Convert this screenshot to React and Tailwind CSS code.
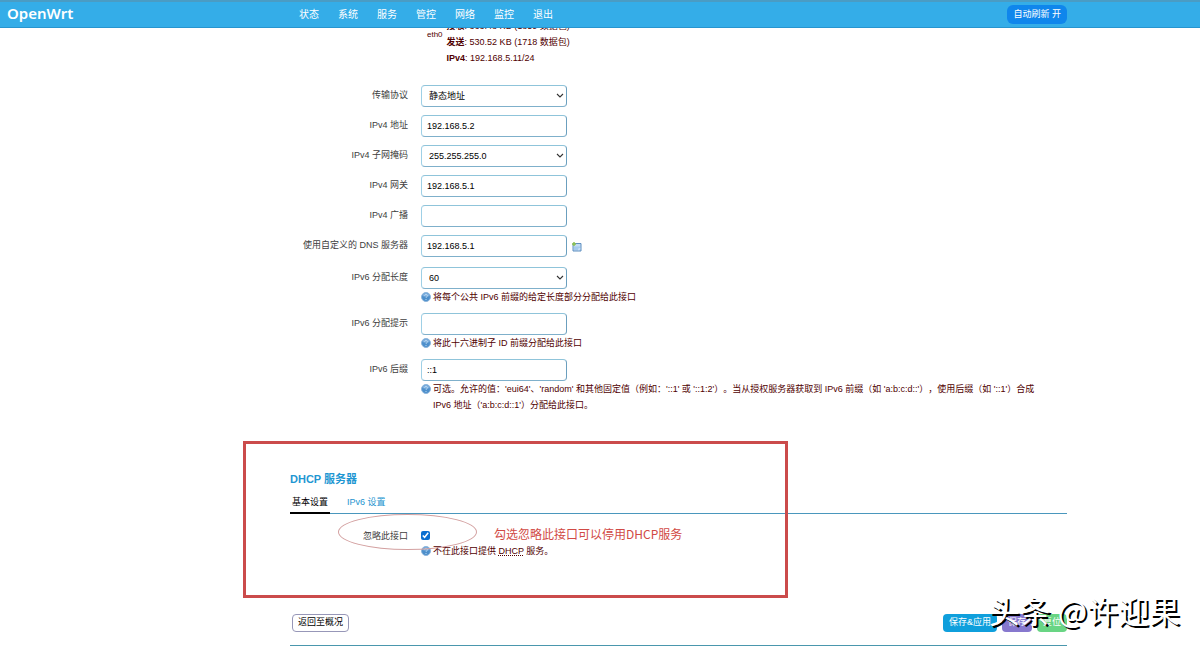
import React from "react";

function HelpIcon() {
  return (
    <svg viewBox="0 0 20 20" className="mt-[3px] h-[10px] w-[10px] shrink-0" aria-hidden="true">
      <circle cx="10" cy="10" r="9" fill="#4d8fcb" stroke="#8fb6dc" strokeWidth="2" />
      <path d="M3 8a7 6 0 0 1 14 0q-7 3-14 0z" fill="#7fb0de" />
      <path d="M7 7.500c.3-3.400 6-3.300 6 0 0 2-3 2.200-3 4.300M10 14v2" fill="none" stroke="#b9d8f3" strokeWidth="2" />
    </svg>
  );
}

function AddIcon() {
  return (
    <svg viewBox="0 0 20 20" className="h-[10px] w-[10px]" aria-hidden="true">
      <path d="M2 3h16v15H2z" fill="#c3dcf4" stroke="#5f8fc0" strokeWidth="2" />
      <path d="M4 9h12v7H4z" fill="#a5cbee" />
      <path d="M17 13h-4v4z" fill="#e9f4ff" />
      <path d="M4 0v8M0 4h8" stroke="#8cc152" strokeWidth="3" />
    </svg>
  );
}

function Chevron() {
  return (
    <svg viewBox="0 0 8 6" className="pointer-events-none absolute top-2 right-[3px] h-[6px] w-2" aria-hidden="true">
      <path d="M1 1l3 3 3-3" fill="none" stroke="#333" strokeWidth="1.100" />
    </svg>
  );
}

const box =
  "block h-[22px] w-full appearance-none rounded-[4px] border border-t-[#8fc4da] border-r-[#6b9fbe] border-b-[#7fb0cb] border-l-[#9fd0e6] bg-white text-[9px] leading-[20px] text-black outline-none";

function Field({ id, label, value, select, help, add }) {
  return (
    <div className="flex gap-[13px]">
      <label htmlFor={id} className="w-[118px] shrink-0 pt-1 text-right leading-3 text-[#404040]">
        {label}
      </label>
      <div className="min-w-0 flex-1">
        <div className="flex items-center gap-[5px]">
          <div className="relative w-[146px]">
            {select ? (
              <>
                <select id={id} className={box + " px-[7px]"} defaultValue={value}>
                  <option>{value}</option>
                </select>
                <Chevron />
              </>
            ) : (
              <input id={id} type="text" className={box + " px-[5px]"} defaultValue={value} />
            )}
          </div>
          {add && (
            <button type="button" aria-label="添加" className="pt-[2px]">
              <AddIcon />
            </button>
          )}
        </div>
        {help && <Help>{help}</Help>}
      </div>
    </div>
  );
}

function Help({ children }) {
  return (
    <div className="flex gap-[2px] pr-6 text-[#500000]">
      <HelpIcon />
      <p className="leading-4 [text-spacing-trim:space-all]">{children}</p>
    </div>
  );
}

const nav = ["状态", "系统", "服务", "管控", "网络", "监控", "退出"];

export default function App() {
  return (
    <div className="relative overflow-hidden bg-white font-['Liberation_Sans','Noto_Sans_CJK_SC',sans-serif] text-[9px]">
      <header className="relative z-10 flex h-7 items-center border-t-2 border-b border-t-[#4a9cc4] border-b-[#2795cf] bg-[#34ade8] pr-[133px] text-white">
        <a href="#" className="w-[299px] shrink-0 pb-[3px] pl-[7px] font-['Noto_Sans',sans-serif] text-[15px] leading-5 font-semibold">
          OpenWrt
        </a>
        <nav className="flex flex-1 gap-[19px] text-[10px]">
          {nav.map((n) => (
            <a key={n} href="#">{n}</a>
          ))}
        </nav>
        <button type="button" className="h-[19px] rounded-[6px] bg-[#0f86ec] px-[6px] text-[9px]">
          自动刷新 开
        </button>
      </header>

      <main className="pr-[133px] pl-[290px]">
        <div className="-mt-[10px] flex gap-1 pl-[137px] leading-4 text-[#500000]">
          <span className="pt-[9px] text-[8px]">eth0</span>
          <div>
            <p><b>接收</b>: 363.48 KB (1859 数据包)</p>
            <p><b>发送</b>: 530.52 KB (1718 数据包)</p>
            <p><b>IPv4</b>: 192.168.5.11/24</p>
          </div>
        </div>

        <form className="flex flex-col gap-2 pt-[19px]">
          <Field id="proto" label="传输协议" value="静态地址" select />
          <Field id="ip" label="IPv4 地址" value="192.168.5.2" />
          <Field id="mask" label="IPv4 子网掩码" value="255.255.255.0" select />
          <Field id="gw" label="IPv4 网关" value="192.168.5.1" />
          <Field id="bc" label="IPv4 广播" value="" />
          <Field id="dns" label="使用自定义的 DNS 服务器" value="192.168.5.1" add />
          <div className="flex flex-col gap-2 pt-[2px]">
            <Field id="len" label="IPv6 分配长度" value="60" select help="将每个公共 IPv6 前缀的给定长度部分分配给此接口" />
            <Field id="hint" label="IPv6 分配提示" value="" help="将此十六进制子 ID 前缀分配给此接口" />
            <Field
              id="suffix"
              label="IPv6 后缀"
              value="::1"
              help="可选。允许的值：'eui64'、'random' 和其他固定值（例如：'::1' 或 '::1:2'）。当从授权服务器获取到 IPv6 前缀（如 'a:b:c:d::'），使用后缀（如 '::1'）合成 IPv6 地址（'a:b:c:d::1'）分配给此接口。"
            />
          </div>
        </form>

        <section className="relative mt-[58px] h-[127px]">
          <h2 className="text-[11px] leading-4 font-bold text-[#1f97d2]">DHCP 服务器</h2>
          <div className="mt-[7px] flex gap-[15px] border-b border-[#4a97bd] leading-4">
            <a href="#" className="-mb-px border-b-2 border-black px-[2px] pb-[2px] text-black">基本设置</a>
            <a href="#" className="px-[2px] text-[#2494cf]">IPv6 设置</a>
          </div>
          <div className="flex items-start gap-[13px] pt-[14px]">
            <label htmlFor="ignore" className="w-[118px] shrink-0 pt-[2px] text-right leading-3 text-[#404040]">忽略此接口</label>
            <div>
              <input id="ignore" type="checkbox" defaultChecked className="mt-[3px] mb-[3px] block h-[9px] w-[9px] accent-[#0b6fd0]" />
              <Help>
                不在此接口提供 <abbr title="动态主机配置协议" className="underline decoration-dotted">DHCP</abbr> 服务。
              </Help>
            </div>
          </div>
          <div className="pointer-events-none absolute -top-[30px] -left-[47px] h-[157px] w-[545px] border-[3px] border-[#cb4b4b]" />
          <div className="pointer-events-none absolute top-[43px] left-[48px] h-[36px] w-[139px] rounded-[50%] border border-[#d3a0a0]" />
          <p className="absolute top-[53px] left-[204px] font-['Noto_Sans_CJK_SC',sans-serif] text-[12px] leading-5 text-[#d14a45]">
            勾选忽略此接口可以停用DHCP服务
          </p>
        </section>

        <footer className="flex items-center gap-[5px] border-b border-[#4a97ad] pt-4 pb-[13px] pl-[2px]">
          <button type="button" className="mr-auto h-[18px] rounded-[4px] border border-[#9797b8] px-[5px] text-black">返回至概况</button>
          <button type="button" className="h-[18px] rounded-[4px] bg-[#0f9fdc] px-[6px] text-white">保存&amp;应用</button>
          <button type="button" className="h-[18px] rounded-[4px] bg-[#8778ce] px-[6px] text-white">保存</button>
          <button type="button" className="h-[18px] rounded-[4px] bg-[#69d584] px-[6px] text-white">复位</button>
        </footer>
      </main>

      <p className="pointer-events-none absolute right-5 bottom-4 font-['Noto_Sans_CJK_SC',sans-serif] text-[31px] leading-10 text-white [text-shadow:2px_2px_0_#000]">
        头条 @许迎果
      </p>
    </div>
  );
}
